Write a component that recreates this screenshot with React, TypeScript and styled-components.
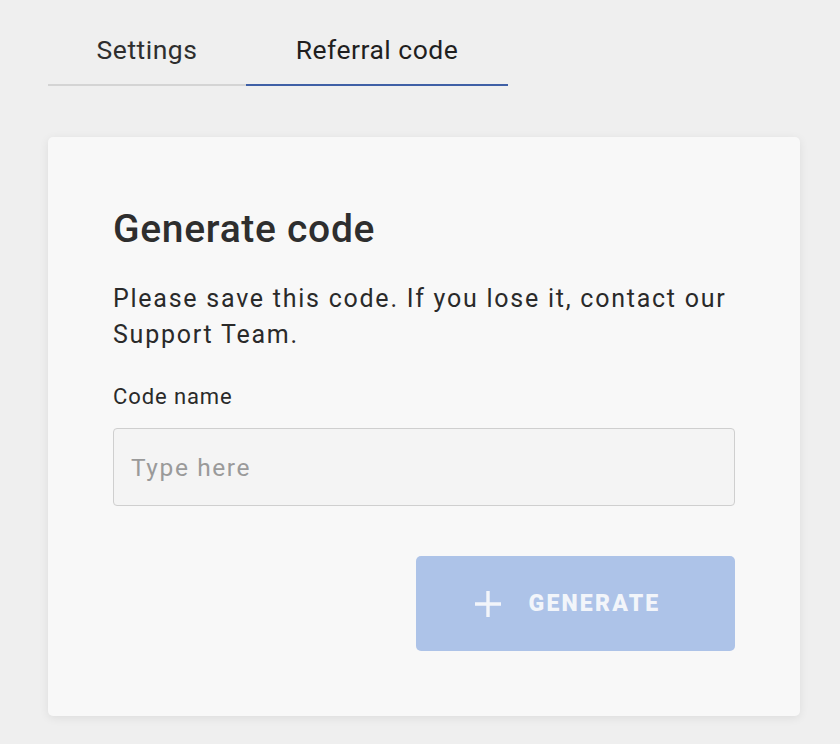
import React from "react";
import styled, { createGlobalStyle } from "styled-components";

const GlobalStyle = createGlobalStyle`
  html, body {
    margin: 0;
    padding: 0;
    background: #efefef;
    font-family: Roboto, "Liberation Sans", sans-serif;
  }
`;

const Page = styled.div`
  width: 840px;
  height: 744px;
  padding: 22px 40px 0 48px;
  box-sizing: border-box;
`;

const Tabs = styled.div`
  display: flex;
  width: 460px;
`;

const Tab = styled.div<{ active?: boolean; width: number }>`
  width: ${(p) => p.width}px;
  height: 64px;
  display: flex;
  align-items: center;
  justify-content: center;
  font-size: 26.5px;
  letter-spacing: 0.5px;
  color: ${(p) => (p.active ? "#1f1f1f" : "#2e2e2e")};
  border-bottom: 2px solid ${(p) => (p.active ? "#3f60a6" : "#d4d4d4")};
  box-sizing: border-box;
  padding-bottom: 8px;
`;

const Card = styled.div`
  margin-top: 51px;
  width: 752px;
  height: 579px;
  background: #f8f8f8;
  border-radius: 5px;
  box-shadow: 0 2px 10px rgba(0, 0, 0, 0.08);
  padding: 70px 65px 0;
  box-sizing: border-box;
  display: flex;
  flex-direction: column;
`;

const Title = styled.h1`
  margin: 0;
  font-size: 39px;
  font-weight: 500;
  color: #2e2e2e;
  line-height: 44px;
  letter-spacing: 0.7px;
`;

const Text = styled.p`
  margin: 30px 0 0;
  font-size: 25px;
  line-height: 36px;
  color: #2a2a2a;
  letter-spacing: 1.75px;
`;

const Label = styled.label`
  margin-top: 31px;
  font-size: 22px;
  color: #2a2a2a;
  line-height: 26px;
  letter-spacing: 0.9px;
`;

const Input = styled.input`
  margin-top: 18px;
  height: 78px;
  width: 100%;
  box-sizing: border-box;
  border: 1px solid #cfcfcf;
  border-radius: 4px;
  background: #f4f4f4;
  padding: 0 17px;
  font-family: inherit;
  font-size: 24.5px;
  letter-spacing: 1.6px;
  color: #333;
  outline: none;
  &::placeholder {
    color: #9a9a9a;
  }
`;

const Actions = styled.div`
  display: flex;
  justify-content: flex-end;
  margin-top: 50px;
`;

const Button = styled.button`
  width: 319px;
  height: 95px;
  border: none;
  border-radius: 5px;
  background: #adc3e8;
  color: #f2f5fa;
  display: flex;
  align-items: center;
  justify-content: center;
  gap: 26px;
  font-family: Roboto, "Liberation Sans", sans-serif;
  font-weight: 900;
  font-size: 23px;
  letter-spacing: 2.2px;
  padding: 0 18px 0 0;
`;

const PlusIcon = () => (
  <svg width="30" height="30" viewBox="0 0 30 30">
    <path d="M15 2v26M2 15h26" stroke="#f2f5fa" strokeWidth="3.4" />
  </svg>
);

export default function App() {
  return (
    <>
      <GlobalStyle />
      <Page>
        <Tabs>
          <Tab width={198}>Settings</Tab>
          <Tab width={262} active>
            Referral code
          </Tab>
        </Tabs>
        <Card>
          <Title>Generate code</Title>
          <Text>
            Please save this code. If you lose it, contact our
            <br />
            Support Team.
          </Text>
          <Label>Code name</Label>
          <Input placeholder="Type here" />
          <Actions>
            <Button>
              <PlusIcon />
              GENERATE
            </Button>
          </Actions>
        </Card>
      </Page>
    </>
  );
}
